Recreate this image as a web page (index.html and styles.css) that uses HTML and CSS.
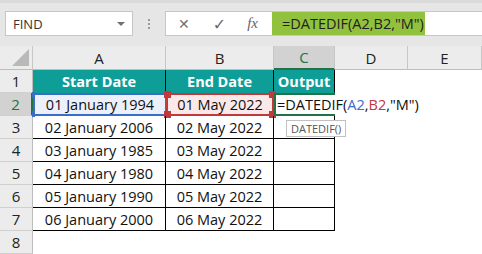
FILE: index.html
```html
<!DOCTYPE html>
<html>
<head>
<meta charset="utf-8">
<link rel="stylesheet" href="styles.css">
</head>
<body>
<div class="toolbar">
  <div class="namebox"><span>FIND</span><span class="caret"></span></div>
  <div class="dots"><i></i><i></i><i></i></div>
  <div class="fbar">
    <span class="ic x">✕</span>
    <span class="ic ok">✓</span>
    <span class="ic fx">fx</span>
    <div class="formula">=DATEDIF(A2,B2,"M")</div>
  </div>
</div>
<div class="sheet">
  <div class="ch corner"><span class="tri"></span></div>
  <div class="ch">A</div>
  <div class="ch">B</div>
  <div class="ch sel">C</div>
  <div class="ch">D</div>
  <div class="ch">E</div>

  <div class="rh">1</div>
  <div class="hd">Start Date</div>
  <div class="hd">End Date</div>
  <div class="hd last">Output</div>
  <div class="e"></div><div class="e"></div>

  <div class="rh sel">2</div>
  <div class="td a2">01 January 1994<i class="h tl"></i><i class="h bl"></i></div>
  <div class="td b2">01 May 2022<i class="h r tl"></i><i class="h r tr"></i><i class="h r bl"></i><i class="h r br"></i></div>
  <div class="td c2"><span class="edit">=DATEDIF(<span class="ra">A2</span>,<span class="rb">B2</span>,"M")</span><span class="tip">DATEDIF()</span></div>
  <div class="e"></div><div class="e"></div>

  <div class="rh">3</div>
  <div class="td">02 January 2006</div><div class="td">02 May 2022</div><div class="td"></div>
  <div class="e"></div><div class="e"></div>

  <div class="rh">4</div>
  <div class="td">03 January 1985</div><div class="td">03 May 2022</div><div class="td"></div>
  <div class="e"></div><div class="e"></div>

  <div class="rh">5</div>
  <div class="td">04 January 1980</div><div class="td">04 May 2022</div><div class="td"></div>
  <div class="e"></div><div class="e"></div>

  <div class="rh">6</div>
  <div class="td">05 January 1990</div><div class="td">05 May 2022</div><div class="td"></div>
  <div class="e"></div><div class="e"></div>

  <div class="rh">7</div>
  <div class="td">06 January 2000</div><div class="td">06 May 2022</div><div class="td"></div>
  <div class="e"></div><div class="e"></div>

  <div class="rh">8</div>
  <div class="e"></div><div class="e"></div><div class="e"></div><div class="e"></div><div class="e"></div>
</div>
</body>
</html>
```
FILE: styles.css
```css
* { box-sizing: border-box; }
html, body { margin: 0; padding: 0; }
body {
  width: 482px; height: 254px; overflow: hidden;
  font-family: "Open Sans", "DejaVu Sans", sans-serif;
  background: #fff; color: #000;
}
.toolbar {
  height: 46px;
  background: #e6e6e6;
  border-top: 3px solid #dadada;
  display: flex; align-items: flex-start;
  padding-top: 8px; padding-left: 5px;
}
.namebox {
  width: 128px; height: 25px;
  background: #fff; border: 1px solid #c6c6c6;
  display: flex; align-items: center; justify-content: space-between;
  padding: 0 7px 0 7px;
  font-size: 13px; color: #333;
}
.caret {
  width: 0; height: 0;
  border-left: 4px solid transparent; border-right: 4px solid transparent;
  border-top: 4px solid #707070;
}
.dots {
  width: 32px; height: 25px;
  display: flex; flex-direction: column; align-items: center; justify-content: center; gap: 2px;
}
.dots i { width: 2px; height: 2px; background: #9a9a9a; display: block; }
.fbar {
  flex: 1; height: 25px;
  background: #fff; border: 1px solid #c6c6c6; border-right: none;
  display: flex; align-items: center;
}
.ic { color: #707070; font-size: 15px; }
.x { margin-left: 12px; font-size: 14px; }
.ok { margin-left: 23px; font-size: 16px; color: #6a6a6a; }
.fx { margin-left: 21px; font-family: "Liberation Serif", serif; font-style: italic; font-size: 15px; color: #666; }
.formula {
  margin-left: 14px; height: 23px; width: 153px;
  background: #92c13e;
  display: flex; align-items: center; padding-left: 10px;
  font-size: 14.5px; color: #1f1f1f;
}
.sheet {
  display: grid;
  grid-template-columns: 33px 133px 108px 61px 73px 74px;
  grid-template-rows: 24px repeat(8, 23px);
}
.ch {
  background: #ececec;
  border-right: 1px solid #c6c6c6;
  border-bottom: 1px solid #bdbdbd;
  display: flex; align-items: center; justify-content: center;
  font-size: 15px; color: #222;
}
.ch.sel { background: #d2d2d2; border-bottom: 2px solid #217346; color: #217346; }
.corner { position: relative; }
.tri {
  position: absolute; right: 3px; bottom: 3px;
  width: 0; height: 0;
  border-left: 17px solid transparent;
  border-bottom: 17px solid #b9b9b9;
}
.rh {
  background: #ececec;
  border-right: 1px solid #bdbdbd;
  border-bottom: 1px solid #d0d0d0;
  display: flex; align-items: center; justify-content: center;
  font-size: 15px; color: #222;
}
.rh.sel { background: #d2d2d2; border-right: 2px solid #217346; color: #217346; }
.hd {
  background: #0f9e97; color: #fff; font-weight: 700;
  border-right: 1px solid #000; border-bottom: 1px solid #0f9e97;
  display: flex; align-items: center; justify-content: center;
  font-size: 14.5px;
}
.td {
  border-right: 1px solid #000; border-bottom: 1px solid #000;
  display: flex; align-items: center; justify-content: center;
  font-size: 14.5px; color: #111;
  white-space: nowrap;
  position: relative;
}
.a2 { background: #ecf0fa; border: 2px solid #3a6dc4; border-right: 1px solid #3a6dc4; }
.b2 { background: #fbe9e9; border: 2px solid #c0393b; }
.c2 {
  justify-content: flex-start; overflow: visible; z-index: 2;
  border: 2px solid #217346; border-right: none; border-bottom: 2px solid #217346;
  padding-left: 1px;
}
.edit { font-size: 14.5px; color: #111; background: transparent; }
.ra { color: #3a6dc4; }
.rb { color: #c0393b; }
.tip {
  position: absolute; left: 10px; top: 25px;
  height: 17px; padding: 0 4px;
  background: #fff; border: 1px solid #c0c0c0;
  font-size: 11px; color: #555;
  display: flex; align-items: center;
}
.h {
  position: absolute; width: 6px; height: 6px; background: #3a6dc4; display: block;
}
.h.tl { left: -3px; top: -3px; width: 3px; }
.h.bl { left: -3px; bottom: -3px; width: 3px; }
.h.r { background: #c0393b; width: 7px; height: 7px; }
.h.r.tl { left: -4px; top: -4px; }
.h.r.bl { left: -4px; bottom: -4px; }
.h.r.tr { right: -4px; top: -4px; left: auto; }
.h.r.br { right: -4px; bottom: -4px; left: auto; }
.e { background: #fff; }
```
